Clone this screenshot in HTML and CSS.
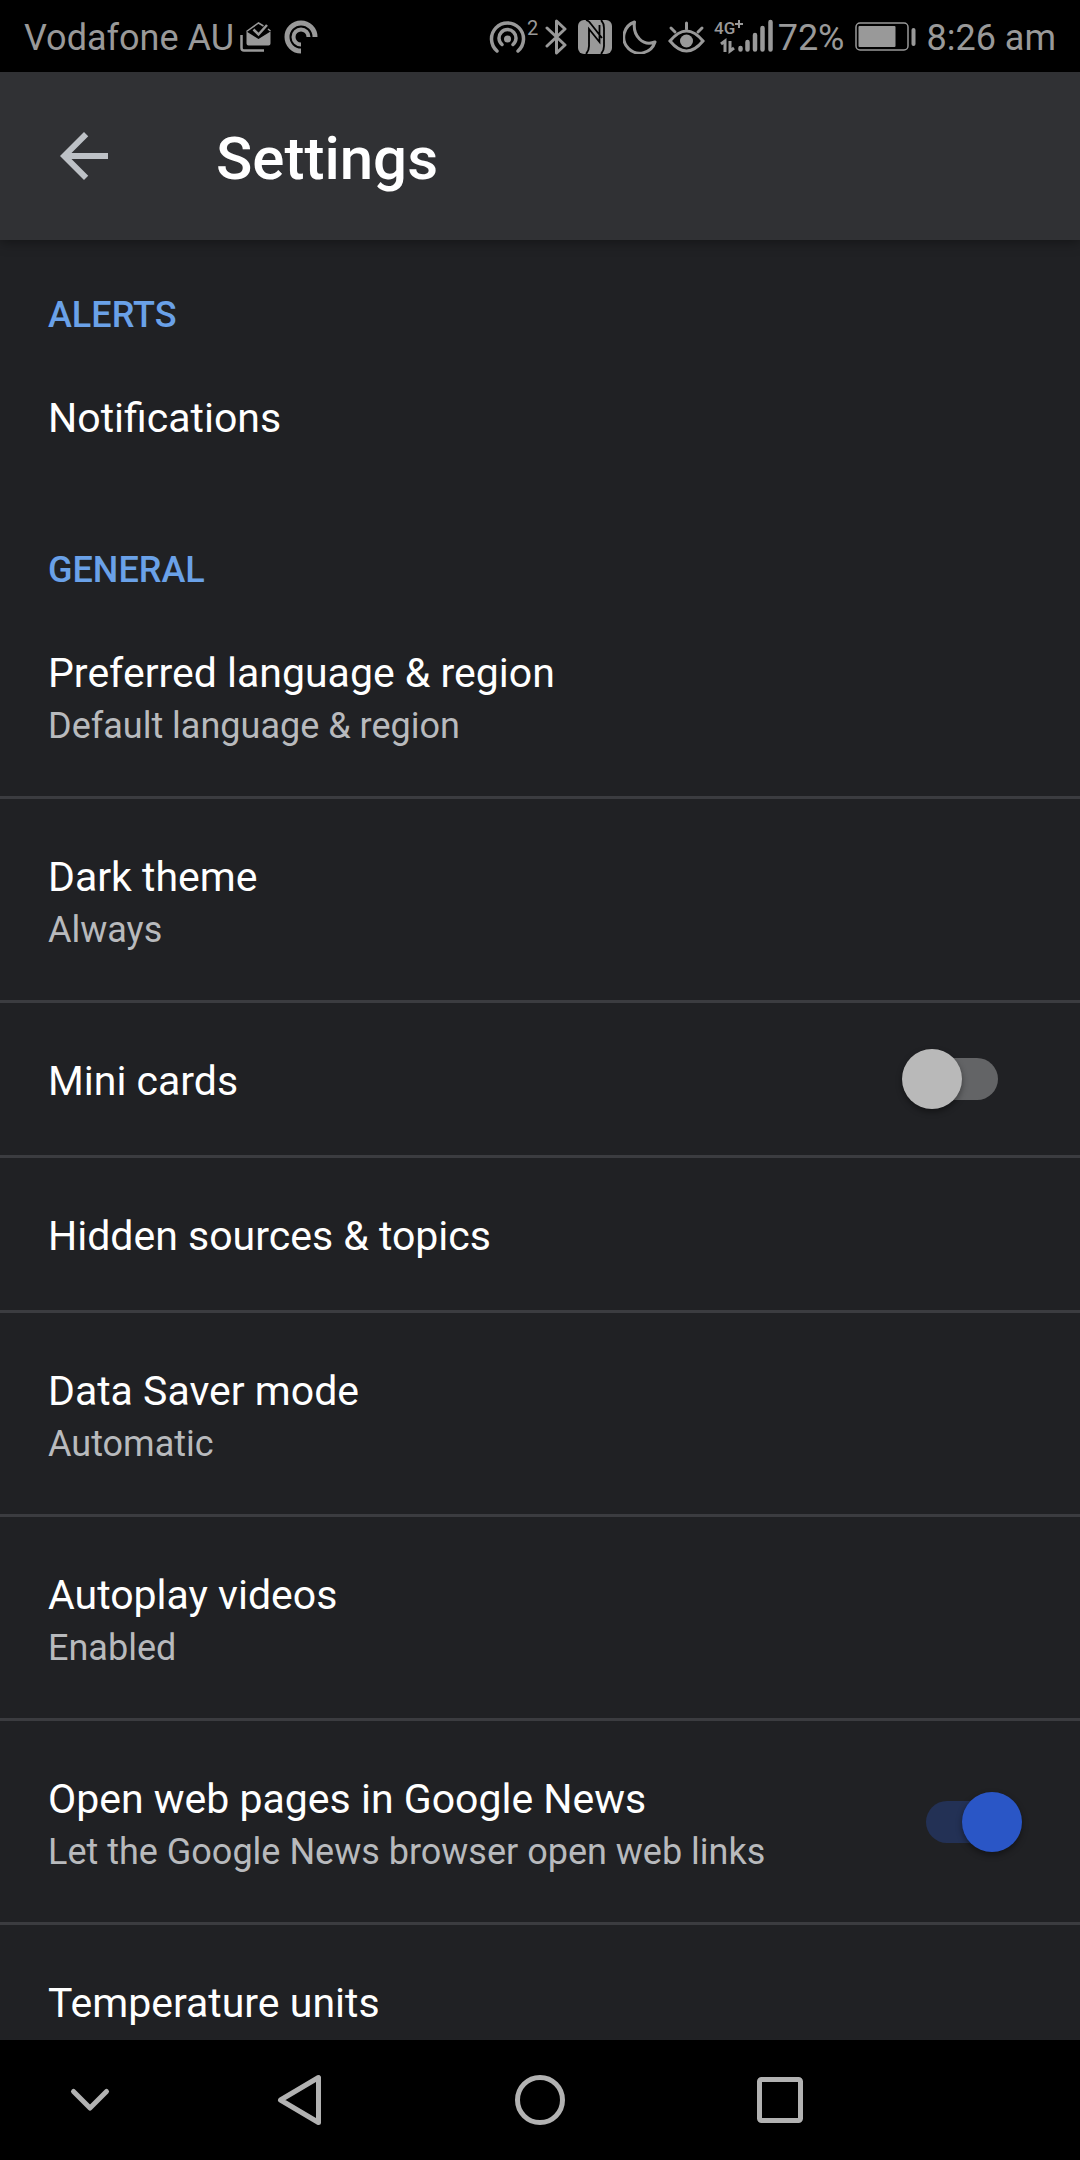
FILE: index.html
```html
<!DOCTYPE html>
<html lang="en">
<head>
  <meta charset="UTF-8">
  <meta name="viewport" content="width=device-width, initial-scale=1">
  <title>Settings</title>
  <link rel="stylesheet" href="styles.css">
</head>
<body>
  <div class="status-bar">
    <span class="carrier">Vodafone AU</span>
    <!-- inbox -->
    <svg class="icon-inbox" width="32" height="32" viewBox="0 0 32 32">
      <path d="M1.500 14v13q0 2.500 2.500 2.500h20" fill="none" stroke="currentColor" stroke-width="2.500"/>
      <path d="M6.500 10.500v12q0 2 2 2h20q2 0 2-2v-12l-12 7.500z" fill="currentColor"/>
      <path d="M6.500 10.500L18.500 2l5 3M28 8l2.500 2" fill="none" stroke="currentColor" stroke-width="1.500"/>
      <path d="M13.500 8.500l5 5L27 4" fill="none" stroke="currentColor" stroke-width="2.500"/>
    </svg>
    <!-- podcast player -->
    <svg class="icon-podcast" width="34" height="34" viewBox="0 0 34 34">
      <g fill="none" stroke="currentColor">
        <path d="M17 31A14 14 0 1 1 31 17" stroke-width="5"/>
        <path d="M17 24.500A7.500 7.500 0 1 1 24.500 17" stroke-width="4"/>
      </g>
    </svg>
    <div class="status-right">
      <!-- hotspot -->
      <svg width="50" height="48" viewBox="0 -6 50 48">
        <g fill="none" stroke="currentColor" stroke-width="3.500" stroke-linecap="round">
          <path d="M8 32A16 16 0 1 1 29 32"/>
          <path d="M13 25.500A8.500 8.500 0 1 1 24 25.500"/>
        </g>
        <circle cx="18.500" cy="20" r="3.500" fill="currentColor"/>
        <text x="38" y="16" class="icon-digit">2</text>
      </svg>
      <!-- bluetooth -->
      <svg class="icon-bluetooth" width="22" height="36" viewBox="0 0 22 36">
        <path d="M2 9l18 17-8.500 8V2L20 10 2 27" fill="none" stroke="currentColor" stroke-width="3" stroke-linejoin="round" stroke-linecap="round"/>
      </svg>
      <!-- nfc -->
      <svg class="icon-nfc" width="34" height="34" viewBox="0 0 34 34">
        <rect width="34" height="34" rx="6" fill="currentColor"/>
        <path d="M8 34q3-3 3-8V9l10.500 13V5M8 0q3 1 5 4l11 14M23 0q3 3 3 8v18q0 5-3 8" fill="none" stroke="#000" stroke-width="1.800"/>
      </svg>
      <!-- do not disturb -->
      <svg class="icon-moon" width="34" height="34" viewBox="0 0 34 34">
        <path d="M11.500 2A16 16 0 1 0 32 22Q23 25.500 16.500 19T11.500 2z" fill="none" stroke="currentColor" stroke-width="3" stroke-linejoin="round"/>
      </svg>
      <!-- eye comfort -->
      <svg class="icon-eye" width="37" height="34" viewBox="0 0 37 34">
        <path d="M2 21Q18.500 1 35 21 18.500 41 2 21z" fill="none" stroke="currentColor" stroke-width="3"/>
        <circle cx="18.500" cy="21" r="6.500" fill="currentColor"/>
        <path d="M18.500 9V3M7 12L3 8M30 12l4-4" stroke="currentColor" stroke-width="3" stroke-linecap="round"/>
      </svg>
      <!-- mobile signal -->
      <svg class="icon-signal" width="60" height="48" viewBox="0 -6 60 48">
        <text x="0" y="15" class="icon-network">4G</text>
        <path d="M21 5h8M25 1v8" stroke="currentColor" stroke-width="2"/>
        <path d="M7 25l4-3v11M16 22v10l4-3" fill="none" stroke="currentColor" stroke-width="3"/>
        <path d="M26.500 29v1.500M33.500 23v7.500M41 16v14.500M48.500 9v21.500M56.500 3v27.500" stroke="currentColor" stroke-width="4.500" stroke-linecap="round"/>
      </svg>
      <span class="battery-level">72%</span>
      <!-- battery -->
      <svg class="icon-battery" width="62" height="30" viewBox="0 0 62 30">
        <rect x="1" y="1" width="52" height="27" rx="4" fill="none" stroke="currentColor" stroke-width="1.500"/>
        <rect x="3.500" y="4" width="37" height="21" rx="1" fill="currentColor"/>
        <rect x="56.500" y="6" width="4" height="18" rx="2" fill="currentColor"/>
      </svg>
      <span class="clock">8:26 am</span>
    </div>
  </div>

  <header class="app-bar">
    <button class="btn-back" aria-label="Back">
      <svg width="72" height="72" viewBox="0 0 24 24">
        <path d="M20 11H7.830l5.590-5.590L12 4l-8 8 8 8 1.410-1.410L7.830 13H20v-2z" fill="currentColor"/>
      </svg>
    </button>
    <h1>Settings</h1>
  </header>

  <main class="settings">
    <h2>Alerts</h2>
    <button class="row last">
      <span class="row-title">Notifications</span>
    </button>

    <h2>General</h2>
    <button class="row">
      <span class="row-title">Preferred language &amp; region</span>
      <span class="row-summary">Default language &amp; region</span>
    </button>
    <button class="row">
      <span class="row-title">Dark theme</span>
      <span class="row-summary">Always</span>
    </button>
    <div class="row row-switch">
      <label class="row-text" for="miniCards">
        <span class="row-title">Mini cards</span>
      </label>
      <input type="checkbox" class="switch" id="miniCards">
    </div>
    <button class="row">
      <span class="row-title">Hidden sources &amp; topics</span>
    </button>
    <button class="row">
      <span class="row-title">Data Saver mode</span>
      <span class="row-summary">Automatic</span>
    </button>
    <button class="row">
      <span class="row-title">Autoplay videos</span>
      <span class="row-summary">Enabled</span>
    </button>
    <div class="row row-switch">
      <label class="row-text" for="openWeb">
        <span class="row-title">Open web pages in Google News</span>
        <span class="row-summary">Let the Google News browser open web links</span>
      </label>
      <input type="checkbox" class="switch" id="openWeb" checked>
    </div>
    <button class="row">
      <span class="row-title">Temperature units</span>
    </button>
  </main>

  <nav class="nav-bar">
    <button aria-label="Hide navigation bar">
      <svg width="52" height="52" viewBox="0 0 52 52">
        <path d="M9.500 17.500L26 34l16.500-16.500"/>
      </svg>
    </button>
    <button aria-label="Back">
      <svg width="52" height="52" viewBox="0 0 52 52">
        <path d="M44.500 3.500v45L6.500 26z"/>
      </svg>
    </button>
    <button aria-label="Home">
      <svg width="52" height="52" viewBox="0 0 52 52">
        <circle cx="26" cy="26" r="22.500"/>
      </svg>
    </button>
    <button aria-label="Recent apps">
      <svg width="52" height="52" viewBox="0 0 52 52">
        <rect x="5.500" y="5.500" width="41" height="41" rx="2"/>
      </svg>
    </button>
  </nav>
</body>
</html>
```

FILE: styles.css
```css
* {
  box-sizing: border-box;
}
body {
  margin: 0;
  height: 100vh;
  display: flex;
  flex-direction: column;
  background-color: #202124;
  color: #fff;
  font-family: Roboto, "Noto Sans", sans-serif;
}
button {
  padding: 0;
  border: none;
  background: none;
  color: inherit;
  font-family: inherit;
  text-align: left;
  cursor: pointer;
}
svg {
  display: block;
  flex: none;
}

/* status bar */
.status-bar {
  display: flex;
  align-items: center;
  flex: none;
  height: 72px;
  padding: 4px 24px 0;
  background-color: #000;
  color: #999;
  font-size: 36px;
  line-height: 44px;
  white-space: nowrap;
}
.status-bar svg {
  margin-bottom: 3px;
}
.icon-inbox {
  margin-left: 6px;
}
.icon-podcast {
  margin-left: 12px;
}
.status-right {
  display: flex;
  align-items: center;
  margin-left: auto;
}
.icon-digit {
  font-size: 20px;
  fill: currentColor;
}
.icon-network {
  font-size: 17px;
  font-weight: 500;
  fill: currentColor;
}
.icon-bluetooth {
  margin-left: 6px;
}
.icon-nfc,
.icon-moon,
.icon-eye {
  margin-left: 11px;
}
.icon-signal {
  margin-left: 9px;
}
.battery-level {
  margin-left: 4px;
}
.icon-battery {
  margin: 0 10px;
}

/* title bar */
.app-bar {
  display: flex;
  align-items: center;
  flex: none;
  height: 168px;
  padding: 0 48px;
  background-color: #303134;
  box-shadow: 0 2px 12px rgba(0, 0, 0, 0.4);
  z-index: 1;
}
.btn-back {
  color: #bdc1c6;
}
.app-bar h1 {
  margin: 0 0 0 96px;
  padding-top: 5px;
  font-size: 60px;
  font-weight: 500;
  line-height: 70px;
}

/* list of settings */
.settings {
  flex: 1;
  min-height: 0;
  overflow-y: auto;
  scrollbar-width: none;
}
.settings h2 {
  margin: 0;
  padding: 54px 48px 4px;
  color: #6aa1e8;
  font-size: 36px;
  font-weight: 500;
  line-height: 42px;
  text-transform: uppercase;
}
.row {
  display: flex;
  flex-direction: column;
  justify-content: flex-start;
  width: 100%;
  min-height: 155px;
  padding: 51px 48px 44px;
  border-bottom: 3px solid #3b3c40;
}
.row.last {
  border-bottom-color: transparent;
}
.row-title {
  display: block;
  font-size: 41px;
  line-height: 54px;
}
.row-summary {
  display: block;
  color: #b8babd;
  font-size: 36px;
  line-height: 52px;
}
.row-switch {
  flex-direction: row;
  align-items: center;
  padding: 0 58px 0 0;
}
.row-text {
  flex: 1;
  align-self: stretch;
  padding: 51px 0 44px 48px;
}

/* switch */
.switch {
  appearance: none;
  position: relative;
  flex: none;
  width: 120px;
  height: 60px;
  margin: 0;
  cursor: pointer;
}
.switch::before {
  content: "";
  position: absolute;
  top: 9px;
  left: 24px;
  width: 72px;
  height: 42px;
  border-radius: 21px;
  background-color: #636466;
}
.switch::after {
  content: "";
  position: absolute;
  top: 0;
  left: 0;
  width: 60px;
  height: 60px;
  border-radius: 50%;
  background-color: #b9b9b9;
  box-shadow: 0 3px 6px rgba(0, 0, 0, 0.4);
}
.switch:checked::before {
  background-color: #233155;
}
.switch:checked::after {
  left: 60px;
  background-color: #2a56c6;
}

/* navigation bar */
.nav-bar {
  display: grid;
  grid-template-columns: 3fr 4fr 4fr 4fr 3fr;
  flex: none;
  height: 120px;
  background-color: #000;
}
.nav-bar button {
  display: flex;
  align-items: center;
  justify-content: center;
}
.nav-bar svg {
  fill: none;
  stroke: #b2b2b2;
  stroke-width: 5px;
  stroke-linecap: round;
  stroke-linejoin: round;
}
```
